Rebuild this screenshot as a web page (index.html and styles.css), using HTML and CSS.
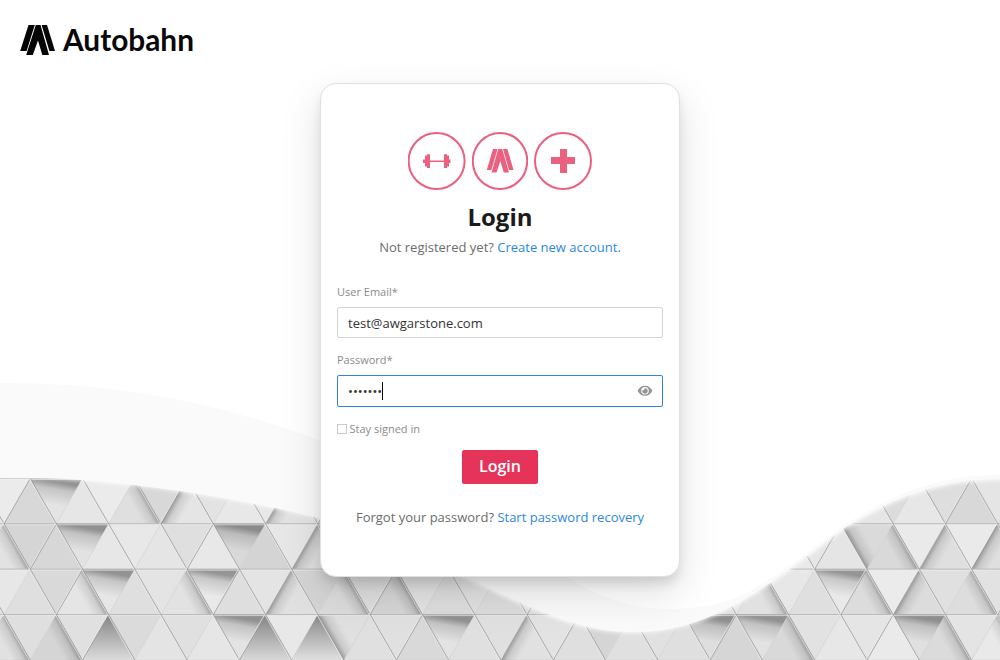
FILE: index.html
```html
<!DOCTYPE html>
<html lang="en">
<head>
<meta charset="utf-8">
<title>Autobahn - Login</title>
<link rel="stylesheet" href="styles.css">
</head>
<body>
<svg class="backdrop" viewBox="0 0 1000 660" aria-hidden="true">
  <defs>
    <linearGradient id="sh-h" x1="0.1" y1="0" x2="0" y2="0.5"><stop offset="0" stop-color="#000" stop-opacity=".36"/><stop offset=".3" stop-color="#000" stop-opacity=".14"/><stop offset="1" stop-color="#000" stop-opacity="0"/></linearGradient>
    <linearGradient id="sh-a" x1="0.5" y1="0" x2="0.5" y2="1"><stop offset="0" stop-color="#000" stop-opacity=".4"/><stop offset="1" stop-color="#000" stop-opacity="0"/></linearGradient>
    <linearGradient id="sh-l" gradientUnits="userSpaceOnUse" x1="13" y1="22.7" x2="26" y2="30"><stop offset="0" stop-color="#000" stop-opacity=".3"/><stop offset=".35" stop-color="#000" stop-opacity=".1"/><stop offset="1" stop-color="#000" stop-opacity="0"/></linearGradient>
    <linearGradient id="sh-r" gradientUnits="userSpaceOnUse" x1="39.3" y1="22.7" x2="26" y2="30"><stop offset="0" stop-color="#000" stop-opacity=".3"/><stop offset=".35" stop-color="#000" stop-opacity=".1"/><stop offset="1" stop-color="#000" stop-opacity="0"/></linearGradient>
    <filter id="soft" x="-5%" y="-5%" width="110%" height="110%"><feGaussianBlur stdDeviation="2"/></filter>
  </defs>
  <g id="tiles"></g>
  <path fill="none" stroke="#fff" stroke-width="5" filter="url(#soft)" d="M-10 474C100 474 210 490 317 515C410 540 440 567 520 601C565 621 595 630 633 630C720 630 775 576 843 527C895 494 940 477 1010 477"/>
  <path class="band" d="M0 370V477C100 477 210 492 317 517.500C410 542 440 567 520 602C565 622 595 632 633 632C720 632 775 578 843 529C895 496 940 479 1000 479V0H0Z"/>
  <path class="sky" d="M0 383C120 383 216 402 320 440.500C430 485 500 555 567 578C600 596 625 609 670 609C700 608 725 604 747 593C780 574 810 551 843 526C895 493 940 475 1000 475V0H0Z"/>
</svg>

<div class="page">
  <header class="brand">
    <svg class="wordmark" viewBox="0 0 190 38" role="img" aria-label="Autobahn">
      <g fill="#050505"><path d="M8.500 3H14.800L6.600 29H.2Z"/><path d="M15.800 3H20.500L29 33H22.300L18 18.500L12.800 33H6.200Z"/><path d="M21.600 3H27L35 29H29.400Z"/></g>
      <text class="wordmark-text" x="43" y="29" textLength="131" lengthAdjust="spacingAndGlyphs">Autobahn</text>
    </svg>
  </header>

  <main class="card">
    <div class="badges">
      <svg class="badge" viewBox="0 0 58 58"><circle cx="28.600" cy="29" r="28"/><path d="M15 27.500H17V23.500H19V22.300H22V28.500H36V22.300H39V23.500H41V27.500H42.500V31H41V34.500H39V36H36V30H22V36H19V34.500H17V31H15Z"/></svg>
      <svg class="badge badge-mid" viewBox="0 0 56 58"><ellipse cx="28" cy="29" rx="27.200" ry="28"/><path d="M21 17H25.600L19.400 38H14.800Z"/><path d="M26.300 17H30.200L37 40.500H31.800L28.300 29L24.500 40.500H19.500Z"/><path d="M31 17H35.400L41.600 38H37Z"/></svg>
      <svg class="badge" viewBox="0 0 58 58"><circle cx="29" cy="29" r="28"/><path d="M26 17H33V25H41V32H33V41H26V32H17V25H26Z"/></svg>
    </div>
    <h1 class="title">Login</h1>
    <p class="note">Not registered yet? <a class="link">Create new account.</a></p>

    <form class="form">
      <label class="label">User Email*</label>
      <div class="field">test@awgarstone.com</div>
      <label class="label label-second">Password*</label>
      <div class="field field-active"><span class="dots">•••••••</span><span class="caret"></span>
        <svg class="eye" viewBox="0 0 16 12"><path fill="#949494" fill-rule="evenodd" d="M8 .8C4.500 .8 2 2.800 .6 5.800C2 8.800 4.500 10.800 8 10.800S14 8.800 15.400 5.800C14 2.800 11.500 .8 8 .8ZM8 2A3.800 3.800 0 1 1 8 9.600A3.800 3.800 0 0 1 8 2Z"/><path fill="#949494" d="M8 3.200A2.700 2.700 0 1 1 5.500 5C6.800 5.800 8 4.800 7.200 3.300Z"/></svg>
      </div>
      <div class="stay"><span class="box"></span><span>Stay signed in</span></div>
      <button class="submit" type="button">Login</button>
    </form>
    <p class="note recovery">Forgot your password? <a class="link">Start password recovery</a></p>
  </main>
</div>
<script src="tiles.js"></script>
</body>
</html>
```
FILE: styles.css
```css
* { box-sizing: border-box; }
body {
  margin: 0;
  height: 660px;
  overflow: hidden;
  background: #fff;
  font-family: "Open Sans", sans-serif;
  font-size: 13px;
  color: #6c6c6c;
}
.backdrop { position: absolute; left: 0; top: 0; width: 1000px; height: 660px; }
.band { fill: #fafafa; }
.sky { fill: #fff; }
.page { position: relative; height: 660px; display: flex; flex-direction: column; align-items: center; }
.brand { align-self: stretch; height: 83px; padding: 22px 0 0 20px; }
.wordmark { display: block; width: 190px; height: 38px; }
.wordmark-text { font-family: Lato, sans-serif; font-weight: 700; font-size: 30px; fill: #080808; }
.card {
  width: 360px;
  height: 494px;
  padding: 48px 16px 0;
  display: flex;
  flex-direction: column;
  align-items: center;
  background: #fff;
  border: 1px solid #e0e0e0;
  border-radius: 16px;
  box-shadow: 0 16px 40px rgba(0, 0, 0, .13), 0 8px 12px -2px rgba(0, 0, 0, .13);
}
.badges { display: flex; gap: 6px; height: 58px; }
.badge { display: block; width: 58px; height: 58px; fill: #ec607f; }
.badge-mid { width: 56px; }
.badge circle, .badge ellipse { fill: none; stroke: #ec607f; stroke-width: 2; }
.title { margin: 10px 0 0; font-size: 24px; line-height: 34px; font-weight: 700; color: #1b1b1b; }
.note { margin: 4px 0 0; line-height: 18px; white-space: nowrap; }
.link { color: #2d87e2; }
.form { width: 326px; margin-top: 27px; display: flex; flex-direction: column; }
.label { font-size: 11px; line-height: 18px; color: #8b8b8b; }
.field {
  height: 31px;
  margin-top: 6px;
  padding: 0 10px;
  display: flex;
  align-items: center;
  border: 1px solid #d4d4d4;
  border-radius: 2px;
  color: #333;
  background: #fff;
}
.label-second { margin-top: 13px; }
.field-active { height: 32px; padding-right: 9px; border-color: #2f83dc; }
.caret { width: 1px; height: 18px; background: #111; }
.eye { width: 16px; height: 12px; margin: 0 0 1px auto; }
.stay { display: flex; align-items: center; gap: 2.5px; margin-top: 13px; font-size: 11px; line-height: 18px; color: #8b8b8b; }
.box { width: 10px; height: 10px; border: 1px solid #cfc8c8; }
.submit {
  align-self: center;
  width: 76px;
  height: 34px;
  margin-top: 12px;
  padding: 0 0 2px;
  border: 0;
  border-radius: 2px;
  background: #e6335a;
  color: #fff;
  font: 600 16px "Open Sans", sans-serif;
}
.recovery { margin-top: 24px; }
```
FILE: tiles.js
```js
// Relief wall of triangular tiles. Each tile: grey level (hex) and shaded side
// (h = horizontal edge, l / r = slanted edges, a = apex, . = flat).
const rows = [
  "e6. eb. d8. e4h e6. eb. dfr d8. e5l e3. e8. e7. e3l df. e0. dd. e3. e0. dd. e3. e0. dd. e2. df. e2. e0. dd. e2. e0. dd. e2. e0. dd. e2. e5. dc. e7. de. d8. e5. e3.",
  "e0. e2r d5. d7. e2h e7. e8. e5. df. e8. d9h d4. e7. dfl e0. dd. e3. e0. dd. e2. df. e2. e0. dd. e2. e0. dd. e2. e0. dd. e2. e9. e6. e5. dal d9r ea. dfl ea. dfl e3.",
  "e0. e7. df. d9. e5r e6h df. e4. e2r e9h de. e4. e0l d5. dcr df. d6r e4. de. e1. dd. e2. e0. dd. e2. e0. dd. e2. e0. e7. e1r e7. df. e9h dcr eb. dcl e0. ddr e2. e0.",
  "e0. e1r df. d5r e0. dca db. e4. e0. e6. e3h d9a e8. e0a e0l e0. e0. d9. e3h e0. e0. e1l e3. df. d5. e0. e1. df. deh d6. e2h d9r e2. e7. e5. ea. e0h dbr e4. e9r e2."
];
const NS = "http://www.w3.org/2000/svg";
const group = document.getElementById("tiles");
const half = 26.15, height = 45.4, originX = 4.1, originY = 478.4;

function add(parent, tag, attrs) {
  const node = document.createElementNS(NS, tag);
  for (const key in attrs) node.setAttribute(key, attrs[key]);
  return parent.appendChild(node);
}

rows.forEach((row, r) => {
  row.split(" ").forEach((code, n) => {
    const i = n - 1;
    const up = (i + r) % 2 !== 0;
    const x = originX + (i - 1) * half;
    const y = originY + r * height;
    const points = up ? `0,${height} ${half},0 ${2 * half},${height}` : `0,0 ${2 * half},0 ${half},${height}`;
    const level = code.slice(0, 2), side = code[2];
    const tile = add(group, "g", { transform: `translate(${x} ${y})` });
    add(tile, "polygon", { points, fill: `#${level}${level}${level}`, stroke: "#cfcfcf", "stroke-width": 0.5 });
    if (side === ".") return;
    const flip = !up && side !== "h";
    const fill = `url(#sh-${side})`;
    const shade = add(tile, "polygon", { points: flip ? `0,${height} ${half},0 ${2 * half},${height}` : points, fill });
    if (flip) shade.setAttribute("transform", `matrix(1 0 0 -1 0 ${height})`);
  });
});

// Grooves between neighbouring tiles: dark cut with a lit rim beside it
for (let r = 0; r < 4; r++) {
  const y = originY + r * height;
  add(group, "path", { d: `M0 ${y}H1000`, stroke: "#b0b0b0", "stroke-width": 0.8 });
  add(group, "path", { d: `M0 ${y + 1}H1000`, stroke: "#ededed", "stroke-width": 0.7 });
}
rows.forEach((row, r) => {
  for (let i = -1; i < 40; i++) {
    const up = (i + r) % 2 !== 0;
    if (!up && (i * 7 + r * 5) % 3 !== 0) continue;
    const x = originX + i * half, y = originY + r * height;
    const from = up ? y : y + height, dy = up ? height : -height;
    add(group, "path", { d: `M${x - 1} ${from}l${half} ${dy}`, stroke: "#ececec", "stroke-width": 0.8 });
    add(group, "path", { d: `M${x} ${from}l${half} ${dy}`, stroke: "#8c8c8c", "stroke-width": 0.6 });
  }
});
```
